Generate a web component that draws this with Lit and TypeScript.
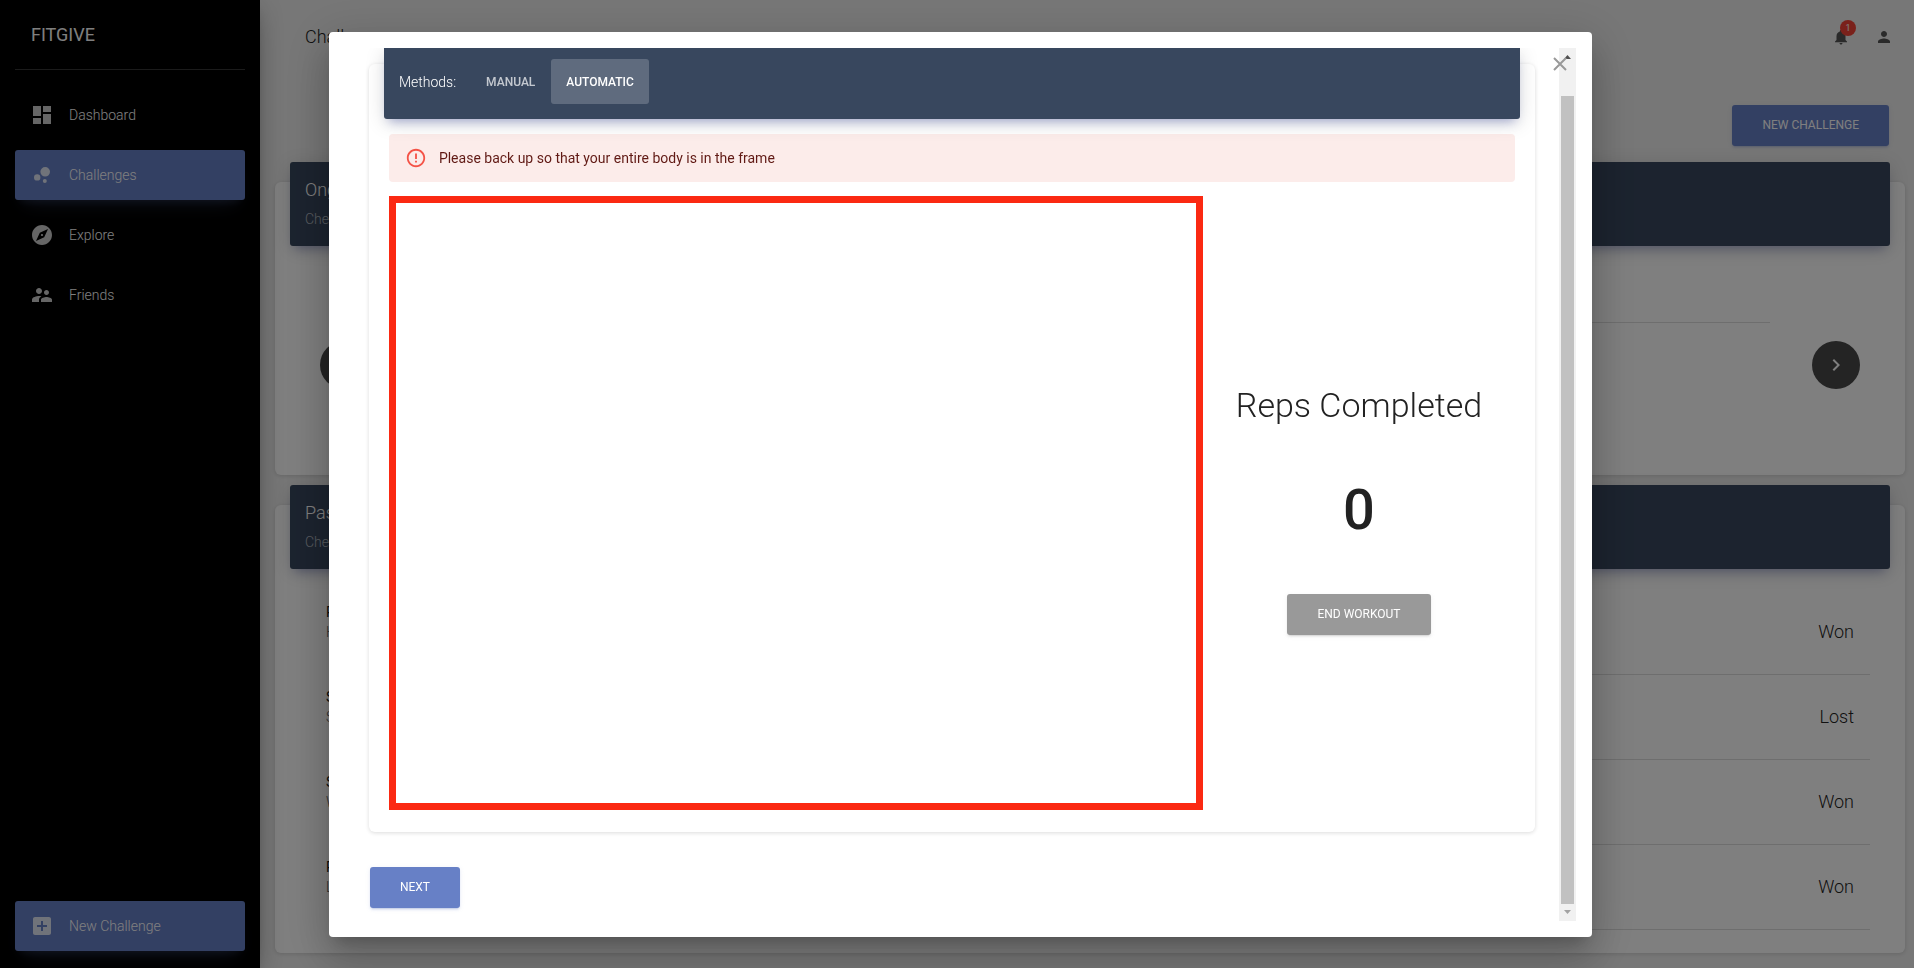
import { LitElement, html, css, svg } from "lit";
import { customElement, state } from "lit/decorators.js";
import { classMap } from "lit/directives/class-map.js";

const icon = (d: string, cls = "icon") =>
  html`<svg class=${cls} viewBox="0 0 24 24" aria-hidden="true">${svg`<path d=${d}></path>`}</svg>`;

const paths = {
  dashboard: "M3 13h8V3H3v10zm0 8h8v-6H3v6zm10 0h8V11h-8v10zm0-18v6h8V3h-8z",
  explore:
    "M12 10.9c-.61 0-1.1.49-1.1 1.1s.49 1.1 1.1 1.1c.61 0 1.1-.49 1.1-1.1s-.49-1.1-1.1-1.1zM12 2C6.48 2 2 6.48 2 12s4.48 10 10 10 10-4.48 10-10S17.52 2 12 2zm2.19 12.19L6 18l3.81-8.19L18 6l-3.81 8.19z",
  bubbles:
    "M7.2 11.2a3.2 3.2 0 1 0 0 6.4 3.2 3.2 0 1 0 0-6.4zM14.8 16a2 2 0 1 0 0 4 2 2 0 1 0 0-4zM15.2 4a4.8 4.8 0 1 0 0 9.6 4.8 4.8 0 1 0 0-9.6z",
  friends:
    "M16.5 12c1.38 0 2.49-1.12 2.49-2.5S17.88 7 16.5 7C15.12 7 14 8.12 14 9.5s1.12 2.5 2.5 2.5zM9 11c1.66 0 2.99-1.34 2.99-3S10.66 5 9 5C7.34 5 6 6.34 6 8s1.34 3 3 3zm7.5 3c-1.83 0-5.5.92-5.5 2.75V19h11v-2.25c0-1.83-3.67-2.75-5.5-2.75zM9 13c-2.33 0-7 1.17-7 3.5V19h7v-2.25c0-.85.33-2.34 2.37-3.47C10.5 13.1 9.66 13 9 13z",
  add: "M19 3H5c-1.11 0-2 .9-2 2v14c0 1.1.89 2 2 2h14c1.1 0 2-.9 2-2V5c0-1.1-.9-2-2-2zm-2 10h-4v4h-2v-4H7v-2h4V7h2v4h4v2z",
  bell: "M12 22c1.1 0 2-.9 2-2h-4c0 1.1.89 2 2 2zm6-6v-5c0-3.07-1.64-5.64-4.5-6.32V4c0-.83-.67-1.5-1.5-1.5s-1.5.67-1.5 1.5v.68C7.63 5.36 6 7.92 6 11v5l-2 2v1h16v-1l-2-2z",
  person:
    "M12 12c2.21 0 4-1.79 4-4s-1.79-4-4-4-4 1.79-4 4 1.79 4 4 4zm0 2c-2.67 0-8 1.34-8 4v2h16v-2c0-2.66-5.33-4-8-4z",
  left: "M15.41 7.41L14 6l-6 6 6 6 1.41-1.41L10.83 12z",
  right: "M10 6L8.59 7.41 13.17 12l-4.58 4.59L10 18l6-6z",
  error:
    "M11 15h2v2h-2zm0-8h2v6h-2zm.99-5C6.47 2 2 6.48 2 12s4.47 10 9.99 10C17.52 22 22 17.52 22 12S17.52 2 11.99 2zM12 20c-4.42 0-8-3.58-8-8s3.58-8 8-8 8 3.58 8 8-3.58 8-8 8z",
};

const base = css`
  :host,
  * {
    box-sizing: border-box;
  }
  h1,
  h2,
  h3,
  p,
  ul {
    margin: 0;
    padding: 0;
    font-weight: 300;
    list-style: none;
  }
  button {
    border: 0;
    margin: 0;
    font: inherit;
    cursor: pointer;
  }
  .btn {
    height: 41px;
    padding: 0 30px;
    border-radius: 3px;
    background: #6780c6;
    color: #fff;
    font-size: 12px;
    font-weight: 400;
    line-height: 17px;
    text-transform: uppercase;
    box-shadow: 0 2px 2px 0 rgba(103, 128, 198, 0.14),
      0 3px 1px -2px rgba(103, 128, 198, 0.2),
      0 1px 5px 0 rgba(103, 128, 198, 0.12);
  }
  .card {
    display: flex;
    flex-direction: column;
    border-radius: 6px;
    background: #fff;
    box-shadow: 0 1px 4px 0 rgba(0, 0, 0, 0.14);
  }
  .card-header {
    position: relative;
    z-index: 1;
    margin: 0 15px;
    border-radius: 3px;
    background: #38475e;
    color: #fff;
    box-shadow: 0 4px 20px 0 rgba(0, 0, 0, 0.14),
      0 7px 10px -5px rgba(63, 81, 181, 0.4);
  }
`;

@customElement("side-nav")
class SideNav extends LitElement {
  static styles = [
    base,
    css`
      :host {
        display: flex;
        flex-direction: column;
        flex: none;
        width: 260px;
        padding: 0 15px 17px;
        background: #000;
        color: #fff;
        z-index: 1;
        box-shadow: 0 10px 30px -12px rgba(0, 0, 0, 0.42),
          0 4px 25px 0 rgba(0, 0, 0, 0.12), 0 8px 10px -5px rgba(0, 0, 0, 0.2);
      }
      .brand {
        height: 70px;
        padding: 20px 16px 0;
        border-bottom: 1px solid rgba(180, 180, 180, 0.3);
        font-size: 18px;
        font-weight: 400;
        line-height: 30px;
      }
      nav {
        display: flex;
        flex: 1;
        flex-direction: column;
        gap: 10px;
        padding-top: 20px;
      }
      .link {
        display: flex;
        align-items: center;
        gap: 15px;
        height: 50px;
        padding: 0 15px;
        border-radius: 3px;
        color: #fff;
        font-size: 14px;
        text-decoration: none;
      }
      .link:last-child {
        margin-top: auto;
      }
      .active {
        background: #6780c6;
        box-shadow: 0 12px 20px -10px rgba(103, 128, 198, 0.28),
          0 4px 20px 0 rgba(0, 0, 0, 0.12),
          0 7px 8px -5px rgba(103, 128, 198, 0.2);
      }
      .icon {
        width: 24px;
        height: 24px;
        fill: rgba(255, 255, 255, 0.8);
      }
    `,
  ];

  private links = [
    { label: "Dashboard", d: paths.dashboard, on: false },
    { label: "Challenges", d: paths.bubbles, on: true },
    { label: "Explore", d: paths.explore, on: false },
    { label: "Friends", d: paths.friends, on: false },
    { label: "New Challenge", d: paths.add, on: true },
  ];

  render() {
    return html`
      <div class="brand">FITGIVE</div>
      <nav>
        ${this.links.map(
          (l) => html`<a class=${classMap({ link: true, active: l.on })} href="#"
            >${icon(l.d)}<span>${l.label}</span></a
          >`
        )}
      </nav>
    `;
  }
}

@customElement("challenges-page")
class ChallengesPage extends LitElement {
  static styles = [
    base,
    css`
      :host {
        display: block;
        flex: 1;
        min-width: 0;
        overflow: hidden;
        padding: 0 9px 15px 15px;
        background: #eee;
        color: #222;
      }
      .topbar {
        display: flex;
        align-items: center;
        justify-content: space-between;
        height: 74px;
        padding: 0 12px 0 30px;
      }
      .topbar h1 {
        font-size: 18px;
        line-height: 30px;
      }
      .tools {
        display: flex;
        gap: 25px;
      }
      .tool {
        position: relative;
        display: flex;
        padding: 0;
        background: none;
      }
      .icon {
        width: 18px;
        height: 18px;
        fill: #555;
      }
      .badge {
        position: absolute;
        top: -8px;
        left: 8px;
        width: 16px;
        height: 16px;
        border-radius: 8px;
        background: #f44336;
        color: #fff;
        font-size: 9px;
        font-weight: 400;
        line-height: 16px;
        text-align: center;
      }
      .actions {
        display: flex;
        justify-content: flex-end;
        padding: 31px 16px 36px;
      }
      .card + .card {
        margin-top: 30px;
      }
      .card-header {
        height: 84px;
        margin-top: -20px;
        padding: 13px 15px;
      }
      .card-header h2 {
        font-size: 18px;
        line-height: 30px;
      }
      .card-header p {
        font-size: 14px;
        line-height: 28px;
        color: rgba(255, 255, 255, 0.62);
      }
      .carousel {
        display: flex;
        align-items: center;
        gap: 42px;
        padding: 76px 45px 67px;
      }
      .slide {
        flex: 1;
        height: 86px;
        border-top: 1px solid #ddd;
      }
      .round {
        display: grid;
        place-items: center;
        width: 48px;
        height: 48px;
        padding: 0;
        border-radius: 50%;
        background: #484848;
      }
      .round .icon {
        fill: #fff;
        width: 24px;
        height: 24px;
      }
      .rows {
        padding: 21px 35px 23px;
      }
      .row {
        display: flex;
        align-items: center;
        justify-content: space-between;
        height: 84px;
        padding: 0 16px;
      }
      .divider {
        height: 1px;
        margin-left: 72px;
        background: #ddd;
      }
      .texts {
        padding-bottom: 20px;
      }
      .name {
        font-size: 14px;
        font-weight: 400;
        line-height: 20px;
        color: #111;
      }
      .kind {
        font-size: 14px;
        line-height: 20px;
        color: #555;
      }
      .result {
        font-size: 18px;
        line-height: 24px;
        color: #222;
      }
    `,
  ];

  private past = [
    ["Pushups", "Hard", "Won"],
    ["Squats", "Sets", "Lost"],
    ["Situps", "Weekly", "Won"],
    ["Planks", "Long", "Won"],
  ];

  render() {
    return html`
      <header class="topbar">
        <h1>Challenges</h1>
        <div class="tools">
          <button class="tool" aria-label="Notifications">
            ${icon(paths.bell)}<span class="badge">1</span>
          </button>
          <button class="tool" aria-label="Profile">${icon(paths.person)}</button>
        </div>
      </header>
      <div class="actions"><button class="btn">New Challenge</button></div>
      <section class="card">
        <div class="card-header">
          <h2>Ongoing</h2>
          <p>Check progress</p>
        </div>
        <div class="carousel">
          <button class="round" aria-label="Previous">${icon(paths.left)}</button>
          <div class="slide"></div>
          <button class="round" aria-label="Next">${icon(paths.right)}</button>
        </div>
      </section>
      <section class="card">
        <div class="card-header">
          <h2>Past</h2>
          <p>Check results</p>
        </div>
        <ul class="rows">
          ${this.past.map(
            ([name, kind, result]) => html`<li>
              <div class="row">
                <div class="texts">
                  <p class="name">${name}</p>
                  <p class="kind">${kind}</p>
                </div>
                <span class="result">${result}</span>
              </div>
              <div class="divider"></div>
            </li>`
          )}
        </ul>
      </section>
    `;
  }
}

@customElement("workout-dialog")
class WorkoutDialog extends LitElement {
  static styles = [
    base,
    css`
      :host {
        position: fixed;
        inset: 0;
        z-index: 10;
        display: flex;
        justify-content: center;
        padding: 32px 0 31px 7px;
        background: rgba(0, 0, 0, 0.5);
        color: #222;
      }
      .dialog {
        position: relative;
        display: flex;
        width: 66vw;
        padding: 16px;
        border-radius: 4px;
        background: #fff;
        box-shadow: 0 11px 15px -7px rgba(0, 0, 0, 0.2),
          0 24px 38px 3px rgba(0, 0, 0, 0.14),
          0 9px 46px 8px rgba(0, 0, 0, 0.12);
      }
      .content {
        flex: 1;
        min-width: 0;
        overflow: hidden;
        padding: 16px 24px 0;
      }
      .card-header {
        display: flex;
        align-items: center;
        height: 71px;
        margin-top: -16px;
        padding: 0 15px 4px;
        border-radius: 0 0 3px 3px;
        font-size: 14px;
      }
      .tabs {
        display: flex;
        gap: 1px;
        margin-left: 15px;
      }
      .tab {
        height: 45px;
        padding: 0 15px;
        border-radius: 3px;
        background: none;
        color: rgba(255, 255, 255, 0.7);
        font-size: 12px;
        font-weight: 500;
        text-transform: uppercase;
      }
      .selected {
        background: rgba(255, 255, 255, 0.2);
        color: #fff;
      }
      .body {
        display: flex;
        flex-direction: column;
        gap: 14px;
        padding: 15px 20px 22px;
      }
      .alert {
        display: flex;
        align-items: center;
        gap: 12px;
        height: 48px;
        padding: 0 16px;
        border-radius: 4px;
        background: #fcecea;
        color: #611a15;
        font-size: 14px;
        font-weight: 400;
      }
      .alert .icon {
        width: 22px;
        height: 22px;
        fill: #f44336;
        opacity: 0.9;
      }
      .workout {
        display: flex;
      }
      .camera {
        flex: 0 1 814px;
        height: 614px;
        border: 7px solid #fb2912;
      }
      .stats {
        display: flex;
        flex: 1;
        flex-direction: column;
        align-items: center;
        justify-content: center;
        gap: 50px;
        padding-top: 13px;
      }
      .stats h3 {
        font-size: 34px;
        line-height: 42px;
        white-space: nowrap;
      }
      .count {
        font-size: 56px;
        font-weight: 500;
        line-height: 68px;
      }
      .muted {
        background: #999;
        box-shadow: 0 2px 2px 0 rgba(153, 153, 153, 0.14),
          0 3px 1px -2px rgba(153, 153, 153, 0.2),
          0 1px 5px 0 rgba(153, 153, 153, 0.12);
      }
      .next {
        margin: 35px 1px 0;
      }
      .scrollbar {
        display: flex;
        flex: none;
        flex-direction: column;
        align-items: center;
        width: 17px;
        background: #f1f1f1;
      }
      .arrow {
        display: block;
        width: 17px;
        height: 17px;
        fill: #505050;
      }
      .down {
        fill: #a3a3a3;
      }
      .thumb {
        flex: 1;
        width: 13px;
        margin-top: 31px;
        background: #c1c1c1;
      }
      .close {
        position: absolute;
        top: 20px;
        right: 20px;
        display: grid;
        place-items: center;
        width: 24px;
        height: 24px;
        padding: 0;
        background: none;
      }
      .cross {
        width: 14px;
        height: 14px;
        stroke: #999;
        stroke-width: 2;
      }
    `,
  ];

  @state() private method = "Automatic";

  render() {
    return html`
      <div class="dialog" role="dialog" aria-label="Workout">
        <div class="content">
          <section class="card">
            <div class="card-header">
              <span>Methods:</span>
              <div class="tabs" role="tablist">
                ${["Manual", "Automatic"].map(
                  (m) => html`<button
                    role="tab"
                    class=${classMap({ tab: true, selected: m === this.method })}
                    @click=${() => (this.method = m)}
                  >
                    ${m}
                  </button>`
                )}
              </div>
            </div>
            <div class="body">
              <div class="alert" role="alert">
                ${icon(paths.error)}
                <span>Please back up so that your entire body is in the frame</span>
              </div>
              <div class="workout">
                <div class="camera"></div>
                <div class="stats">
                  <h3>Reps Completed</h3>
                  <div class="count">0</div>
                  <button class="btn muted">End Workout</button>
                </div>
              </div>
            </div>
          </section>
          <button class="btn next">Next</button>
        </div>
        <div class="scrollbar" aria-hidden="true">
          <svg class="arrow" viewBox="0 0 17 17"><path d="M5 11L8.5 7L12 11z"></path></svg>
          <div class="thumb"></div>
          <svg class="arrow down" viewBox="0 0 17 17"><path d="M5 6L8.5 10L12 6z"></path></svg>
        </div>
        <button class="close" aria-label="Close">
          <svg class="cross" viewBox="0 0 14 14"><path d="M1 1L13 13M13 1L1 13"></path></svg>
        </button>
      </div>
    `;
  }
}

@customElement("app-root")
class AppRoot extends LitElement {
  static styles = css`
    :host {
      display: flex;
      height: 100vh;
      overflow: hidden;
      font-family: Roboto, "Liberation Sans", sans-serif;
      font-size: 14px;
      font-weight: 300;
      line-height: 20px;
    }
  `;

  render() {
    return html`
      <side-nav></side-nav>
      <challenges-page></challenges-page>
      <workout-dialog></workout-dialog>
    `;
  }
}
